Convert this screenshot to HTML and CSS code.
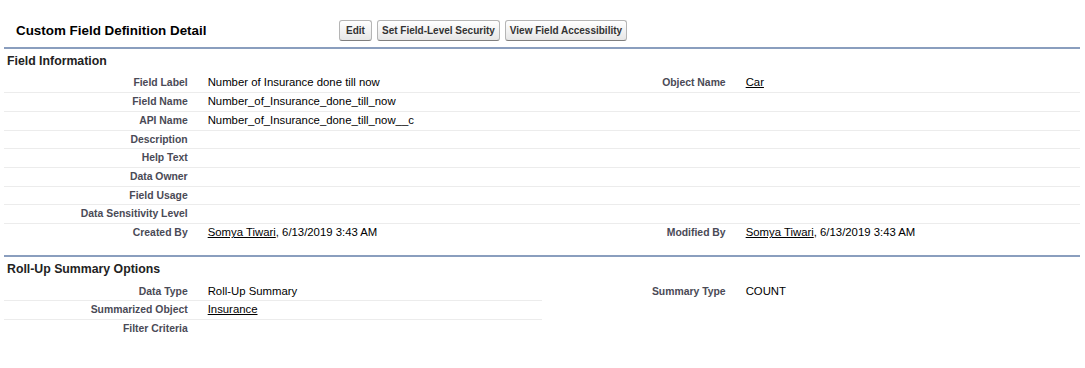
FILE: index.html
```html
<!DOCTYPE html>
<html lang="en">
<head>
    <meta charset="UTF-8">
    <title>Custom Field Definition Detail</title>
    <link rel="stylesheet" href="styles.css">
</head>
<body>
    <div class="page">
        <div class="block-head">
            <h2 class="block-title">Custom Field Definition Detail</h2>
            <div class="btns">
                <button class="btn btn-edit">Edit</button>
                <button class="btn">Set Field-Level Security</button>
                <button class="btn">View Field Accessibility</button>
            </div>
        </div>

        <!-- 字段信息 -->
        <div class="sect">
            <h3 class="sect-title">Field Information</h3>
            <table class="detail">
                <colgroup>
                    <col class="c-label"><col class="c-data"><col class="c-label"><col class="c-data">
                </colgroup>
                <tr>
                    <td class="lbl">Field Label</td><td>Number of Insurance done till now</td>
                    <td class="lbl">Object Name</td><td><a href="#">Car</a></td>
                </tr>
                <tr>
                    <td class="lbl">Field Name</td><td>Number_of_Insurance_done_till_now</td>
                    <td class="lbl"></td><td></td>
                </tr>
                <tr>
                    <td class="lbl">API Name</td><td>Number_of_Insurance_done_till_now__c</td>
                    <td class="lbl"></td><td></td>
                </tr>
                <tr>
                    <td class="lbl">Description</td><td></td>
                    <td class="lbl"></td><td></td>
                </tr>
                <tr>
                    <td class="lbl">Help Text</td><td></td>
                    <td class="lbl"></td><td></td>
                </tr>
                <tr>
                    <td class="lbl">Data Owner</td><td></td>
                    <td class="lbl"></td><td></td>
                </tr>
                <tr>
                    <td class="lbl">Field Usage</td><td></td>
                    <td class="lbl"></td><td></td>
                </tr>
                <tr>
                    <td class="lbl">Data Sensitivity Level</td><td></td>
                    <td class="lbl"></td><td></td>
                </tr>
                <tr class="last">
                    <td class="lbl">Created By</td><td><a href="#">Somya Tiwari</a>, 6/13/2019 3:43 AM</td>
                    <td class="lbl">Modified By</td><td><a href="#">Somya Tiwari</a>, 6/13/2019 3:43 AM</td>
                </tr>
            </table>
        </div>

        <!-- 汇总选项 -->
        <div class="sect">
            <h3 class="sect-title">Roll-Up Summary Options</h3>
            <table class="detail">
                <colgroup>
                    <col class="c-label"><col class="c-data"><col class="c-label"><col class="c-data">
                </colgroup>
                <tr>
                    <td class="lbl">Data Type</td><td>Roll-Up Summary</td>
                    <td class="lbl nb">Summary Type</td><td class="nb">COUNT</td>
                </tr>
                <tr>
                    <td class="lbl">Summarized Object</td><td><a href="#">Insurance</a></td>
                    <td class="lbl nb"></td><td class="nb"></td>
                </tr>
                <tr class="last">
                    <td class="lbl">Filter Criteria</td><td></td>
                    <td class="lbl"></td><td></td>
                </tr>
            </table>
        </div>
    </div>
</body>
</html>
```

FILE: styles.css
```css
* {
    margin: 0;
    padding: 0;
    box-sizing: border-box;
}

body {
    font-family: "Liberation Sans", Arial, sans-serif;
    color: #000;
    background: #fff;
}

.page {
    margin: 0 5px 0 4px;
}

.block-head {
    display: flex;
    align-items: center;
    padding-top: 20px;
    padding-bottom: 6px;
}

.block-title {
    width: 335px;
    padding-left: 12px;
    font-size: 13.4px;
    font-weight: bold;
    color: #000;
}

.btns {
    display: flex;
    gap: 5px;
}

.btn {
    height: 21px;
    padding: 0 4px;
    font-family: "Liberation Sans", Arial, sans-serif;
    font-size: 10px;
    font-weight: bold;
    color: #333;
    background: linear-gradient(#fff, #e6e6e6);
    border: 1px solid #b5b5b5;
    border-bottom-color: #7f7f7f;
    border-radius: 3px;
}

.btn-edit {
    min-width: 33px;
}

.sect {
    border-top: 2px solid #8a9ebe;
    margin-bottom: 13px;
}

.sect-title {
    padding: 5px 3px 6px;
    font-size: 12.3px;
    line-height: 14px;
    font-weight: bold;
    color: #222;
}

.detail {
    width: 100%;
    table-layout: fixed;
    border-collapse: collapse;
}

.c-label {
    width: 18%;
}

.c-data {
    width: 32%;
}

.detail td {
    height: 18.7px;
    padding: 0 10px;
    font-size: 11.35px;
    line-height: 17.7px;
    border-bottom: 1px solid #ececec;
    vertical-align: middle;
}

.detail td.lbl {
    text-align: right;
    font-size: 10.4px;
    font-weight: bold;
    color: #4a4a56;
}

.detail td.nb,
.detail tr.last td {
    border-bottom: none;
}

.detail a {
    color: #000;
    text-decoration: underline;
}
```
